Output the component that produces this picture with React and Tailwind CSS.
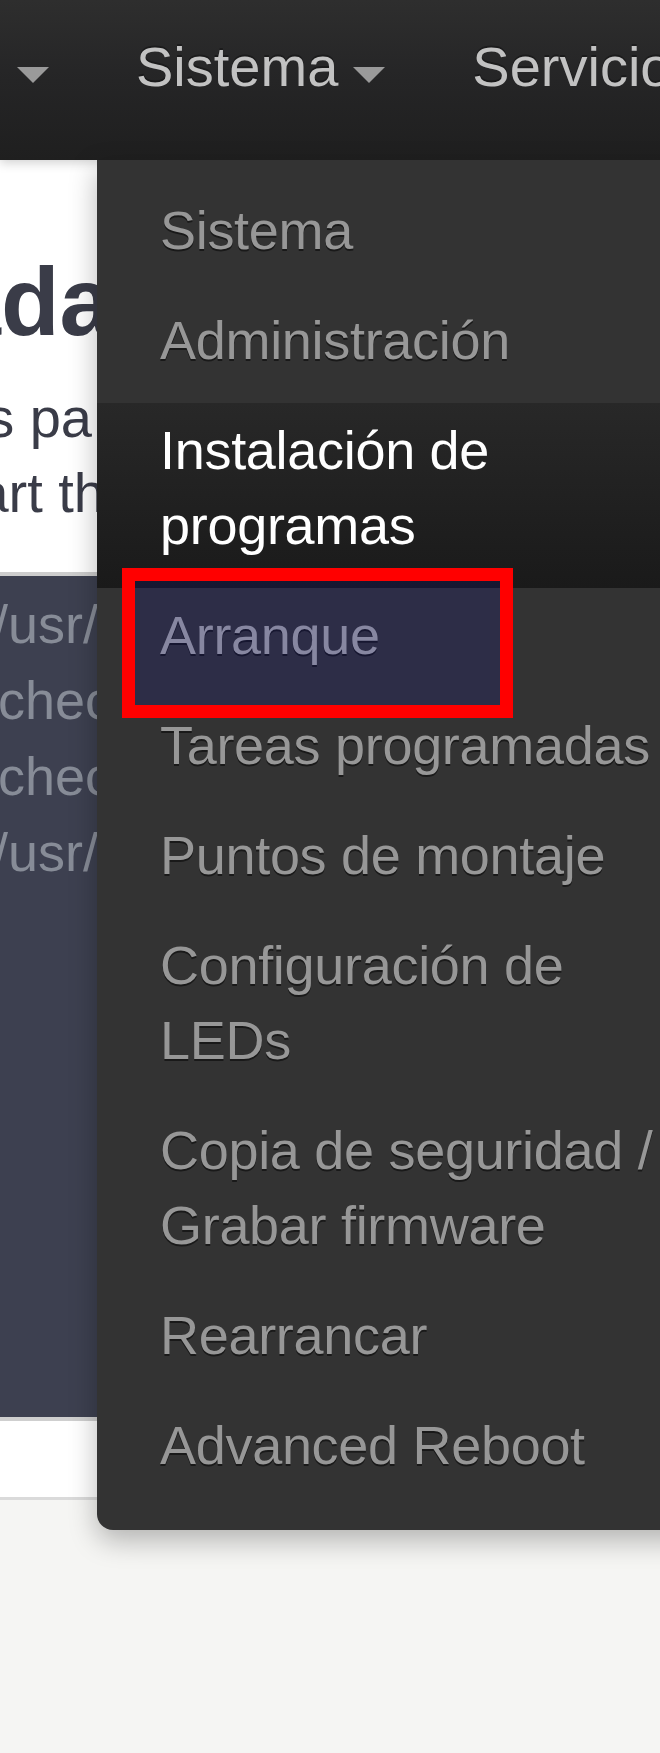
import React from 'react';

const menuItems = [
    { label: 'Sistema' },
    { label: 'Administración' },
    { label: 'Instalación de programas', active: true },
    { label: 'Arranque' },
    { label: 'Tareas programadas' },
    { label: 'Puntos de montaje' },
    { label: 'Configuración de LEDs' },
    { label: 'Copia de seguridad / Grabar firmware' },
    { label: 'Rearrancar' },
    { label: 'Advanced Reboot' },
];

const Caret = ({ className = '' }) => (
    <div className={`w-0 h-0 border-x-[16px] border-t-[16px] border-x-transparent border-t-[#9a9a9a] ${className}`} />
);

const NavItem = ({ label, caret = true, className = '' }) => (
    <div className={`flex items-start shrink-0 ${className}`}>
        <span className="text-[56px] leading-[64px] text-[#c2c2c2] [text-shadow:0_-2px_0_rgba(0,0,0,0.3)]">{label}</span>
        {caret && <Caret className="ml-[15px] mt-[32px]" />}
    </div>
);

// clipped line: text is aligned to the right edge of a fixed box, the left part falls off screen
const ClipLine = ({ width, className = '', children }) => (
    <div className={`flex justify-end overflow-hidden whitespace-nowrap ${width} ${className}`}>
        <span className="shrink-0">{children}</span>
    </div>
);

const App = () => {
    return (
        <div className="relative min-h-[1753px] overflow-hidden bg-[#f5f5f3] font-['Liberation_Sans',Arial,sans-serif]">
            {/* top navbar */}
            <header className="relative z-10 h-[160px] flex items-start pt-[35px] pl-[17px] whitespace-nowrap overflow-hidden bg-linear-to-b from-[#2e2e2e] via-[#252526] to-[#1f1f1f] shadow-[0_3px_10px_rgba(0,0,0,0.18)]">
                <Caret className="mt-[32px] shrink-0" />
                <NavItem label="Sistema" className="ml-[87px]" />
                <NavItem label="Servicios" caret={false} className="ml-[87px]" />
            </header>

            {/* page content underneath */}
            <main className="flex flex-col">
                <section className="bg-white h-[416px] border-b-4 border-[#cdcdcd]">
                    <ClipLine width="w-[113px]" className="mt-[94px] text-[96px] leading-none font-bold text-[#3a3c48]">
                        Instalada
                    </ClipLine>
                    <div className="mt-[30px] text-[56px] leading-[75px] text-[#3a3c48]">
                        <ClipLine width="w-[92px]">los scripts pa</ClipLine>
                        <ClipLine width="w-[105px]">to restart th</ClipLine>
                    </div>
                </section>
                <section className="bg-[#3d4050] h-[845px] pt-[10px] border-b-4 border-[#cfcfcf] text-[54px] leading-[76px] text-[#878c97]">
                    <ClipLine width="w-[98px]">exec /usr/</ClipLine>
                    <ClipLine width="w-[112px]">chec</ClipLine>
                    <ClipLine width="w-[112px]">chec</ClipLine>
                    <ClipLine width="w-[98px]">exec /usr/</ClipLine>
                </section>
                <section className="bg-white h-[79px] border-b-[3px] border-[#dadada]" />
            </main>

            {/* open dropdown menu */}
            <div className="absolute z-20 left-[97px] top-[160px] w-[640px] pt-[23px] pb-[22px] bg-[#333333] rounded-bl-[16px] shadow-[0_10px_28px_rgba(0,0,0,0.28)]">
                {menuItems.map((item) => (
                    <div
                        key={item.label}
                        className={`pl-[63px] pr-[47px] pt-[10px] pb-[25px] text-[54px] leading-[75px] tracking-[-0.3px] ${
                            item.active
                                ? 'bg-linear-to-b from-[#282828] to-[#1a1a1a] text-white'
                                : 'text-[#979797] [text-shadow:0_2px_0_rgba(0,0,0,0.5)]'
                        }`}
                    >
                        {item.label}
                    </div>
                ))}
                {/* annotation box around "Arranque" */}
                <div className="absolute left-[25px] top-[408px] w-[391px] h-[150px] border-[13px] border-[#ff0000] bg-[rgba(0,0,255,0.1)]" />
            </div>
        </div>
    );
};

export default App;
